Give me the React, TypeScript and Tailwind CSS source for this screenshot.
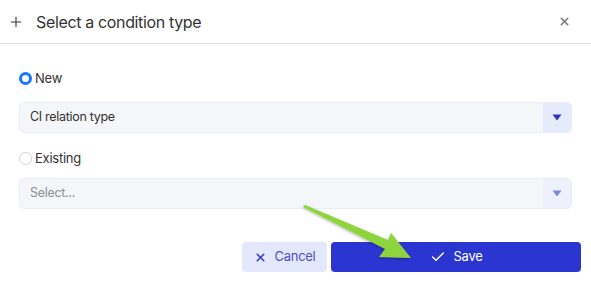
import { Check, Plus, X } from 'lucide-react'

const font = { fontFamily: 'Inter, "Noto Sans", sans-serif' }

function Caret({ muted }: { muted?: boolean }) {
  return (
    <svg width="10" height="7" viewBox="0 0 10 7">
      <path d="M0.5 0.5 H9.5 L5 6.5 Z" fill={muted ? '#7f86de' : '#2a32c8'} />
    </svg>
  )
}

function Select({ value, placeholder, muted }: { value?: string; placeholder?: string; muted?: boolean }) {
  return (
    <div className="flex h-[31px] overflow-hidden rounded-[5px] border border-[#e9ecf6] bg-[#f5f6fa]">
      <div
        className={`flex flex-1 items-center px-[10px] text-[12.5px] tracking-[-0.3px] ${value ? 'text-[#333]' : 'text-[#8d8f96]'}`}
      >
        {value ?? placeholder}
      </div>
      <div className={`flex w-[28px] items-center justify-center ${muted ? 'bg-[#eef0fc]' : 'bg-[#e6eafd]'}`}>
        <Caret muted={muted} />
      </div>
    </div>
  )
}

function Radio({ checked, label }: { checked?: boolean; label: string }) {
  return (
    <label className="flex items-center gap-[3px] text-[13px] tracking-[-0.25px] text-[#333]">
      {checked ? (
        <span className="box-border h-[13px] w-[13px] rounded-full border-[3.5px] border-[#1677ff] bg-white" />
      ) : (
        <span className="box-border h-[13px] w-[13px] rounded-full border border-[#cfd3dc] bg-white" />
      )}
      {label}
    </label>
  )
}

export default function App() {
  return (
    <div className="relative h-[282px] w-[591px] bg-white" style={font}>
      <div className="flex h-[44px] items-center border-b border-[#e3e3e3] pl-[8px] pr-[20px]">
        <Plus size={16} strokeWidth={1.6} className="text-[#333]" />
        <div className="ml-[12px] flex-1 text-[16px] tracking-[-0.35px] text-[#333]">Select a condition type</div>
        <X size={13} strokeWidth={2.8} className="text-[#7a7a7a]" />
      </div>

      <div className="px-[19px] pt-[25px]">
        <Radio checked label="New" />
        <div className="mt-[13px]">
          <Select value="CI relation type" />
        </div>
        <div className="mt-[16px]">
          <Radio label="Existing" />
        </div>
        <div className="mt-[10px]">
          <Select placeholder="Select..." muted />
        </div>
      </div>

      <div className="mt-[33px] flex justify-end gap-[4px] pr-[10px]">
        <button className="flex h-[30px] w-[85px] items-center justify-center gap-[8px] rounded-[4px] bg-[#e4e8fd] text-[13px] tracking-[-0.3px] text-[#4a4fc7]">
          <X size={13} strokeWidth={3} className="text-[#3a40c4]" />
          Cancel
        </button>
        <button className="flex h-[30px] w-[250px] items-center justify-center gap-[8px] rounded-[4px] bg-[#2b35d1] text-[13px] tracking-[-0.3px] text-white">
          <Check size={16} strokeWidth={2.2} />
          Save
        </button>
      </div>

      <svg className="pointer-events-none absolute left-0 top-0" width="591" height="282">
        <defs>
          <filter id="sh" x="-20%" y="-20%" width="140%" height="140%">
            <feGaussianBlur in="SourceAlpha" stdDeviation="1.5" />
            <feOffset dx="0" dy="1" />
            <feComponentTransfer>
              <feFuncA type="linear" slope="0.35" />
            </feComponentTransfer>
            <feMerge>
              <feMergeNode />
              <feMergeNode in="SourceGraphic" />
            </feMerge>
          </filter>
        </defs>
        <path
          d="M303 207 L305 205 L388 240 L391 233 L411 258 L379 257 L385 249 Z"
          fill="#8ed43c"
          filter="url(#sh)"
        />
      </svg>
    </div>
  )
}
